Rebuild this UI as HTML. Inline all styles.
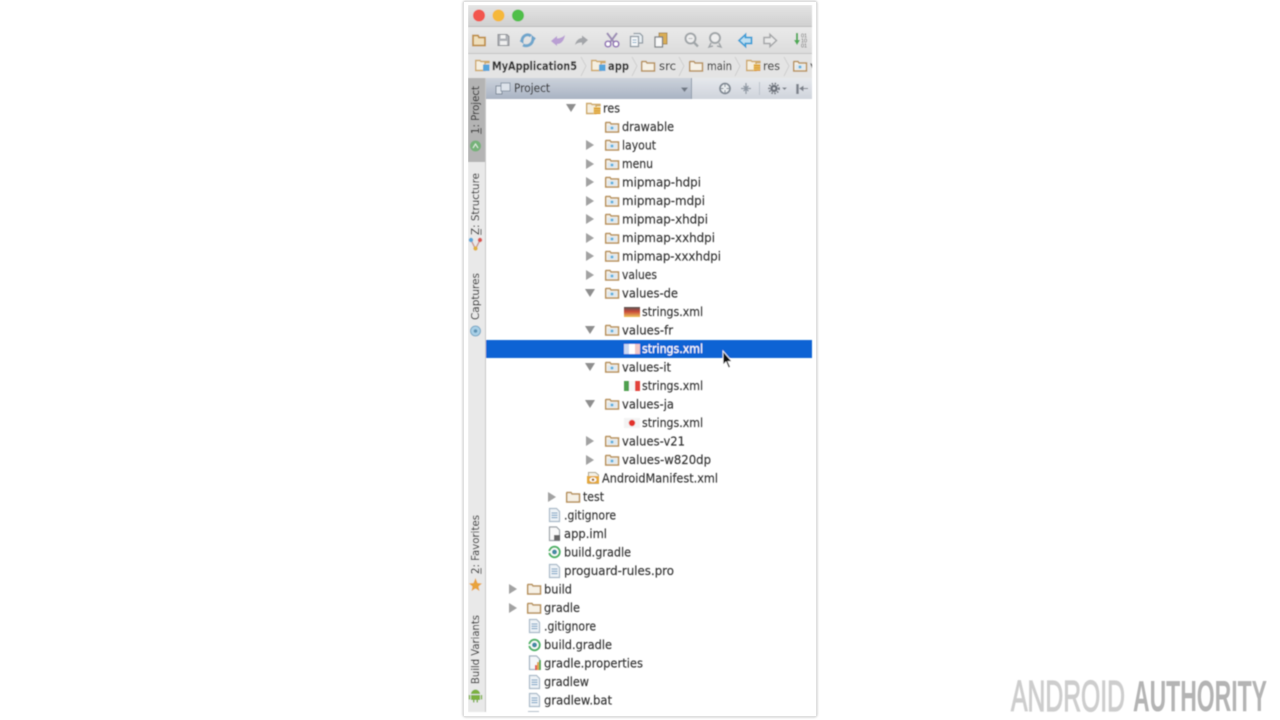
<!DOCTYPE html>
<html>
<head>
<meta charset="utf-8">
<style>
html,body{margin:0;padding:0;width:1280px;height:720px;overflow:hidden;background:#fff}
svg{display:block;position:absolute;left:0;top:0}
.t{font-family:"DejaVu Sans","Liberation Sans",sans-serif;font-size:12px;fill:#333;stroke:#333;stroke-width:.15}
.v{font-family:"DejaVu Sans","Liberation Sans",sans-serif;font-size:11px;fill:#333;stroke:#333;stroke-width:.12}
</style>
</head>
<body>
<svg width="1280" height="720" viewBox="0 0 1280 720" xmlns="http://www.w3.org/2000/svg">
<defs>
<linearGradient id="title" x1="0" y1="0" x2="0" y2="1"><stop offset="0" stop-color="#e4e4e4"/><stop offset="1" stop-color="#d0d0d0"/></linearGradient>
<linearGradient id="tool" x1="0" y1="0" x2="0" y2="1"><stop offset="0" stop-color="#e9e9e9"/><stop offset="1" stop-color="#dcdcdc"/></linearGradient>
<linearGradient id="hd" x1="0" y1="0" x2="0" y2="1"><stop offset="0" stop-color="#ccd2db"/><stop offset="1" stop-color="#a9b3c3"/></linearGradient>
<linearGradient id="hd2" x1="0" y1="0" x2="0" y2="1"><stop offset="0" stop-color="#e6e8ec"/><stop offset="1" stop-color="#cfd4dc"/></linearGradient>
<linearGradient id="de" x1="0" y1="0" x2="0" y2="1"><stop offset="0" stop-color="#555"/><stop offset=".45" stop-color="#c8473a"/><stop offset="1" stop-color="#edc45a"/></linearGradient>
<filter id="soft" x="0" y="0" width="100%" height="100%"><feGaussianBlur stdDeviation="0.5"/></filter>
<filter id="sh" x="-5%" y="-5%" width="110%" height="110%"><feGaussianBlur stdDeviation="1"/></filter>
<clipPath id="navclip"><rect x="468" y="54" width="344" height="24"/></clipPath>
<g id="fo"><path d="M0.7 2V11H13.5V3H6L5 1.500H1Z" fill="#f6f1e6" stroke="#b7925c" stroke-width="1.500"/></g>
<g id="fb"><use href="#fo"/><rect x="2.500" y="4.500" width="9.500" height="5" fill="#dfe9f0"/><circle cx="7" cy="7" r="1.500" fill="#5fb0dc"/></g>
<g id="fm"><path d="M0.700 1.500V11.500H10V3.500H14V2.500H6L5 1.500Z" fill="#f5efe0" stroke="#cda868" stroke-width="1.400"/><rect x="8" y="5.500" width="6.500" height="6.500" fill="#55a5dc"/></g>
<g id="fr"><path d="M0.700 1.500V11.500H10V3.500H14V2.500H6L5 1.500Z" fill="#f5efe0" stroke="#cda868" stroke-width="1.400"/><rect x="7.500" y="5" width="7" height="7" fill="#eccb6e"/><rect x="8" y="6" width="6.500" height="1.300" fill="#d9952a"/><rect x="8" y="8.300" width="6.500" height="1.300" fill="#d9952a"/><rect x="8" y="10.600" width="6.500" height="1.300" fill="#d9952a"/></g>
<path id="ar" d="M0 0L8 5L0 10Z" fill="#a2a2a2"/>
<path id="ad" d="M0 0H10L5 8Z" fill="#8e8e8e"/>
<g id="doc"><path d="M0.500 0.500H7.500L10.500 3.500V13.500H0.500Z" fill="#eef3f7" stroke="#a9b9c7" stroke-width="1.200"/><path d="M2.500 5H8.500M2.500 7.300H8.500M2.500 9.600H8.500" stroke="#6f9cc0" stroke-width="1"/></g>
<g id="gr"><circle cx="6.500" cy="6.500" r="5.200" fill="#fff" stroke="#4fb267" stroke-width="2"/><circle cx="6.500" cy="6.500" r="2.500" fill="#458ba3"/><path d="M-0.500 6.500H2.500" stroke="#fff" stroke-width="1.600"/></g>
</defs>

<!-- window shadow -->
<rect x="463.500" y="1.500" width="353" height="715" fill="#fff" stroke="#8f8f8f" stroke-width="1" rx="2" filter="url(#sh)"/>
<rect x="464" y="2" width="352" height="714" fill="#fff"/>

<g filter="url(#soft)">
<!-- title bar -->
<rect x="468" y="5" width="344" height="21" fill="url(#title)"/>
<rect x="468" y="26" width="344" height="1" fill="#bcbcbc"/>
<circle cx="479" cy="15.500" r="6" fill="#f2554d"/>
<circle cx="498.500" cy="15.500" r="6" fill="#f5b83b"/>
<circle cx="518" cy="15.500" r="6" fill="#4fbf4a"/>

<!-- toolbar -->
<rect x="468" y="27" width="344" height="27" fill="url(#tool)"/>
<rect x="468" y="53" width="344" height="1" fill="#c4c4c4"/>
<path d="M473 35.500V45.500H485V37.500H479L478 35.500Z" fill="#efdfbc" stroke="#bf9048" stroke-width="1.800"/>
<path d="M498 34.500H507L509 36.500V45.500H498Z" fill="#aeb1b6" stroke="#8a8d92"/><rect x="500.500" y="35" width="5" height="3.500" fill="#f2f2f2"/><rect x="500" y="41" width="7" height="4" fill="#eee"/>
<path d="M531 36C527 33 522 36 522 41L520.500 40M523 45C527 47 533 45 533 38L535 39.500" fill="none" stroke="#6fa6cc" stroke-width="3"/>
<path d="M551 41L557 36V38.500C560 38.500 563 37 565 35C564 41 561 44 557 44V46Z" fill="#b99fd3"/>
<path d="M588 40L582 35.500V38C579 38 576 40.500 575 45C577 43 579 42.500 582 42.500V45.500Z" fill="#a3a5a9"/>
<path d="M607 33L614.500 43M617 33L609.500 43" stroke="#9c8db5" stroke-width="2" fill="none"/><circle cx="608" cy="44" r="2.800" fill="#fff" stroke="#9577b8" stroke-width="1.700"/><circle cx="616" cy="44" r="2.800" fill="#fff" stroke="#9577b8" stroke-width="1.700"/>
<path d="M633.500 33.500H640L642.500 36V43H639" fill="#e8eef2" stroke="#8f9aa3" stroke-width="1.300"/><rect x="630.500" y="36.500" width="8" height="10" fill="#f5f7f9" stroke="#8f9aa3" stroke-width="1.300"/>
<path d="M632.500 40H636.500M632.500 42.500H636.500" stroke="#8ab0cb"/>
<rect x="659" y="33" width="8" height="11" fill="#d9ad55" stroke="#a98a4e"/><rect x="655" y="37" width="7.500" height="10" fill="#f8f8f8" stroke="#7d8083" stroke-width="1.300"/>
<circle cx="690.500" cy="38.500" r="5" fill="#eee" stroke="#a0a5a8" stroke-width="2"/><path d="M694 42.500L698 46.500" stroke="#a0a5a8" stroke-width="2.400"/><path d="M688.500 38.500H692.500" stroke="#b5b8ba"/>
<circle cx="715" cy="38" r="5" fill="#eee" stroke="#a0a5a8" stroke-width="2"/><path d="M711 43L709 47L713 46M719 43L721 47L717 46" stroke="#a0a5a8" stroke-width="1.500" fill="none"/>
<path d="M739 40.500L745.500 34.500V37.500H751.500V43.500H745.500V46.500Z" fill="#bfe0f2" stroke="#3c9fd6" stroke-width="1.800"/>
<path d="M776.500 40.500L770 34.500V37.500H764V43.500H770V46.500Z" fill="#e9e9e9" stroke="#a4a6a8" stroke-width="1.500"/>
<path d="M797 33V41" stroke="#4eaa55" stroke-width="2"/><path d="M794 40L797 45L800 40Z" fill="#4eaa55"/>
<text x="801" y="37.500" font-family="Liberation Sans,sans-serif" font-size="5.500" fill="#666">01</text><text x="801" y="42.500" font-family="Liberation Sans,sans-serif" font-size="5.500" fill="#666">10</text><text x="801" y="47.500" font-family="Liberation Sans,sans-serif" font-size="5.500" fill="#666">01</text>

<!-- nav bar -->
<rect x="468" y="54" width="344" height="24" fill="#e4e4e4"/>
<use href="#fm" x="475" y="59"/>
<text x="492" y="70" class="t" style="font-weight:bold;font-size:11.500px" textLength="85" lengthAdjust="spacingAndGlyphs">MyApplication5</text>
<path d="M581 57L586 66L581 76" fill="none" stroke="#cfcfcf"/>
<use href="#fm" x="591" y="59"/>
<text x="608" y="70" class="t" style="font-weight:bold;font-size:11.500px" textLength="21" lengthAdjust="spacingAndGlyphs">app</text>
<path d="M632 57L637 66L632 76" fill="none" stroke="#cfcfcf"/>
<use href="#fo" x="641" y="60"/>
<text x="659" y="70" class="t" style="font-size:11.500px" textLength="17" lengthAdjust="spacingAndGlyphs">src</text>
<path d="M679 57L684 66L679 76" fill="none" stroke="#cfcfcf"/>
<use href="#fo" x="689" y="60"/>
<text x="707" y="70" class="t" style="font-size:11.500px" textLength="25" lengthAdjust="spacingAndGlyphs">main</text>
<path d="M735 57L740 66L735 76" fill="none" stroke="#cfcfcf"/>
<use href="#fr" x="746" y="59"/>
<text x="763" y="70" class="t" style="font-size:11.500px" textLength="17" lengthAdjust="spacingAndGlyphs">res</text>
<path d="M784 57L789 66L784 76" fill="none" stroke="#cfcfcf"/>
<use href="#fb" x="793" y="60"/>
<g clip-path="url(#navclip)"><text x="810" y="70" class="t" style="font-size:11.500px">v</text></g>

<!-- tool window header -->
<rect x="486" y="78" width="205" height="21" fill="url(#hd)"/>
<rect x="692" y="78" width="120" height="21" fill="url(#hd2)"/>
<rect x="691" y="78" width="1" height="21" fill="#8f9bab"/>
<rect x="496" y="86" width="6" height="8" fill="#dde3ea" stroke="#7e8a99"/><rect x="501" y="83" width="9" height="8" fill="#dde3ea" stroke="#8b98a8"/>
<text x="514" y="92" class="t" style="font-size:11.500px" textLength="36" lengthAdjust="spacingAndGlyphs">Project</text>
<path d="M681 87.500H688L684.500 92Z" fill="#6f7884"/>
<circle cx="725" cy="88.500" r="5" fill="#e9ecef" stroke="#7f8893" stroke-width="1.800"/><path d="M725 84.500V87M725 90V92.500M721 88.500H723.500M726.500 88.500H729" stroke="#7f8893"/>
<path d="M746 83V94M741 88.500H751M743.500 86L746 88L748.500 86M743.500 91L746 89L748.500 91" stroke="#8f98a3" stroke-width="1.300" fill="none"/>
<rect x="759" y="82" width="1" height="13" fill="#bcc3cc"/>
<circle cx="774" cy="88.500" r="3.800" fill="#6f757e"/><circle cx="774" cy="88.500" r="5" fill="none" stroke="#6f757e" stroke-width="1.800" stroke-dasharray="1.500 1.500"/><circle cx="774" cy="88.500" r="1.200" fill="#d9dde2"/>
<path d="M782 87.500H787L784.500 90Z" fill="#7b818a"/>
<path d="M797.500 84V94" stroke="#7b818a" stroke-width="2.500"/><path d="M800 88.500H808M800 88.500L803 86.500V90.500Z" stroke="#7b818a" fill="#7b818a"/>

<!-- sidebar -->
<rect x="468" y="78" width="18" height="634" fill="#e9e9e9"/>
<rect x="485" y="78" width="1" height="634" fill="#c8c8c8"/>
<rect x="468" y="78" width="17" height="84" fill="#b4b4b4"/>
<text class="v" transform="translate(479,134) rotate(-90)" textLength="48" lengthAdjust="spacingAndGlyphs">1: Project</text>
<path d="M481 134V128" stroke="#333"/>
<circle cx="475.500" cy="146" r="5.500" fill="#76b279"/><path d="M473 148L475.500 144L478 148" stroke="#e6f0e6" fill="none"/>
<text class="v" transform="translate(479,235) rotate(-90)" textLength="62" lengthAdjust="spacingAndGlyphs">Z: Structure</text>
<path d="M481 235V229" stroke="#333"/>
<path d="M471 240L475.500 249L480 240" fill="none" stroke="#c89a9a" stroke-width="1.400"/><circle cx="471" cy="240" r="2.200" fill="#5aa6d8"/><circle cx="480" cy="240" r="2.200" fill="#d9534f"/><circle cx="475.500" cy="248.500" r="2.200" fill="#e0b13e"/>
<text class="v" transform="translate(479,320) rotate(-90)" textLength="47" lengthAdjust="spacingAndGlyphs">Captures</text>
<circle cx="475.500" cy="331" r="5" fill="#a8cfe6" stroke="#7aa9c6"/><circle cx="475.500" cy="331" r="1.800" fill="#5f93b3"/>
<text class="v" transform="translate(479,574) rotate(-90)" textLength="59" lengthAdjust="spacingAndGlyphs">2: Favorites</text>
<path d="M481 574V568" stroke="#333"/>
<path d="M475.500 578L477.500 583L482 583.500L478.500 586.500L479.500 591L475.500 588.500L471.500 591L472.500 586.500L469 583.500L473.500 583Z" fill="#e8a33c"/>
<text class="v" transform="translate(479,684) rotate(-90)" textLength="69" lengthAdjust="spacingAndGlyphs">Build Variants</text>
<path d="M471 694A4.500 4.500 0 0 1 480 694ZM471 695H480V700H478V702.500H476.500V700H474.500V702.500H473V700H471ZM468.800 695H470.200V699.500H468.800ZM480.800 695H482.200V699.500H480.800Z" fill="#7cb13f"/>

<!-- selection -->
<rect x="486" y="340" width="326" height="18" fill="#0863d4"/>

<!-- tree icons: arrows -->
<use href="#ad" x="566" y="104"/>
<use href="#ar" x="586" y="140"/><use href="#ar" x="586" y="159"/><use href="#ar" x="586" y="177"/><use href="#ar" x="586" y="196"/><use href="#ar" x="586" y="214"/><use href="#ar" x="586" y="233"/><use href="#ar" x="586" y="251"/><use href="#ar" x="586" y="270"/>
<use href="#ad" x="585" y="289"/><use href="#ad" x="585" y="326"/><use href="#ad" x="585" y="363"/><use href="#ad" x="585" y="400"/>
<use href="#ar" x="586" y="436"/><use href="#ar" x="586" y="455"/>
<use href="#ar" x="548" y="492"/>
<use href="#ar" x="509" y="584"/><use href="#ar" x="509" y="603"/>

<!-- folders -->
<use href="#fr" x="586" y="102"/>
<use href="#fb" x="605" y="121"/><use href="#fb" x="605" y="139"/><use href="#fb" x="605" y="158"/><use href="#fb" x="605" y="176"/><use href="#fb" x="605" y="195"/><use href="#fb" x="605" y="213"/><use href="#fb" x="605" y="232"/><use href="#fb" x="605" y="250"/><use href="#fb" x="605" y="269"/><use href="#fb" x="605" y="287"/><use href="#fb" x="605" y="324"/><use href="#fb" x="605" y="361"/><use href="#fb" x="605" y="398"/><use href="#fb" x="605" y="435"/><use href="#fb" x="605" y="454"/>
<use href="#fo" x="566" y="491"/><use href="#fo" x="527" y="583"/><use href="#fo" x="527" y="602"/>

<!-- flags -->
<rect x="624" y="307" width="16" height="10" fill="url(#de)"/>
<rect x="624" y="344" width="5" height="10" fill="#c9d7f2"/><rect x="629" y="344" width="6" height="10" fill="#fff"/><rect x="635" y="344" width="5" height="10" fill="#f0c6c6"/>
<rect x="624" y="381" width="5" height="10" fill="#4fa04f"/><rect x="629" y="381" width="6" height="10" fill="#f7f7f7"/><rect x="635" y="381" width="5" height="10" fill="#e2433a"/>
<rect x="624" y="418" width="16" height="10" fill="#f3f3f3"/><circle cx="632" cy="423" r="3.200" fill="#e2332c"/>

<!-- manifest -->
<path d="M588.500 472.500H595.500L598.500 475V483.500H588.500Z" fill="#f4f1e6" stroke="#a9a490"/><rect x="587" y="476" width="12" height="7.500" fill="#e4a93c"/><ellipse cx="593" cy="479.700" rx="3.500" ry="2.300" fill="#fff"/><circle cx="593" cy="479.700" r="1.300" fill="#a06a1c"/>

<!-- files -->
<use href="#doc" x="549" y="508"/>
<path d="M549.500 527H556.500L559.500 530V540.500H549.500Z" fill="#fafafa" stroke="#9aa0a6" stroke-width="1.200"/><rect x="554" y="535" width="6" height="5.500" fill="#666"/>
<use href="#gr" x="548" y="545.500"/>
<use href="#doc" x="549" y="564"/>
<use href="#doc" x="529" y="619"/>
<use href="#gr" x="528" y="638.500"/>
<path d="M529.500 656H536.500L539.500 659V669.500H529.500Z" fill="#f4f7fa" stroke="#a0b0bf" stroke-width="1.200"/><rect x="535" y="665" width="1.800" height="5" fill="#e2433a"/><rect x="537" y="662" width="1.800" height="8" fill="#e0a33a"/><rect x="539" y="660" width="1.800" height="10" fill="#4fa04f"/>
<use href="#doc" x="529" y="675"/>
<use href="#doc" x="529" y="693"/>
<rect x="528" y="711" width="11" height="1" fill="#b5c0ca"/>

<!-- tree labels -->
<text class="t" x="603" y="112.500" textLength="17" lengthAdjust="spacingAndGlyphs">res</text>
<text class="t" x="622" y="131" textLength="52" lengthAdjust="spacingAndGlyphs">drawable</text>
<text class="t" x="622" y="149.500" textLength="34" lengthAdjust="spacingAndGlyphs">layout</text>
<text class="t" x="622" y="168" textLength="31" lengthAdjust="spacingAndGlyphs">menu</text>
<text class="t" x="622" y="186.500" textLength="79" lengthAdjust="spacingAndGlyphs">mipmap-hdpi</text>
<text class="t" x="622" y="205" textLength="83" lengthAdjust="spacingAndGlyphs">mipmap-mdpi</text>
<text class="t" x="622" y="223.500" textLength="86" lengthAdjust="spacingAndGlyphs">mipmap-xhdpi</text>
<text class="t" x="622" y="242" textLength="93" lengthAdjust="spacingAndGlyphs">mipmap-xxhdpi</text>
<text class="t" x="622" y="260.500" textLength="99" lengthAdjust="spacingAndGlyphs">mipmap-xxxhdpi</text>
<text class="t" x="622" y="279" textLength="35" lengthAdjust="spacingAndGlyphs">values</text>
<text class="t" x="622" y="297.500" textLength="56" lengthAdjust="spacingAndGlyphs">values-de</text>
<text class="t" x="642" y="316" textLength="61" lengthAdjust="spacingAndGlyphs">strings.xml</text>
<text class="t" x="622" y="334.500" textLength="51" lengthAdjust="spacingAndGlyphs">values-fr</text>
<text class="t" x="642" y="353" textLength="61" lengthAdjust="spacingAndGlyphs" style="fill:#fff;stroke:#fff">strings.xml</text>
<text class="t" x="622" y="371.500" textLength="49" lengthAdjust="spacingAndGlyphs">values-it</text>
<text class="t" x="642" y="390" textLength="61" lengthAdjust="spacingAndGlyphs">strings.xml</text>
<text class="t" x="622" y="408.500" textLength="52" lengthAdjust="spacingAndGlyphs">values-ja</text>
<text class="t" x="642" y="427" textLength="61" lengthAdjust="spacingAndGlyphs">strings.xml</text>
<text class="t" x="622" y="445.500" textLength="63" lengthAdjust="spacingAndGlyphs">values-v21</text>
<text class="t" x="622" y="464" textLength="89" lengthAdjust="spacingAndGlyphs">values-w820dp</text>
<text class="t" x="602" y="482.500" textLength="116" lengthAdjust="spacingAndGlyphs">AndroidManifest.xml</text>
<text class="t" x="583" y="501" textLength="21" lengthAdjust="spacingAndGlyphs">test</text>
<text class="t" x="564" y="519.500" textLength="52" lengthAdjust="spacingAndGlyphs">.gitignore</text>
<text class="t" x="564" y="538" textLength="43" lengthAdjust="spacingAndGlyphs">app.iml</text>
<text class="t" x="564" y="556.500" textLength="67" lengthAdjust="spacingAndGlyphs">build.gradle</text>
<text class="t" x="564" y="575" textLength="110" lengthAdjust="spacingAndGlyphs">proguard-rules.pro</text>
<text class="t" x="544" y="593.500" textLength="28" lengthAdjust="spacingAndGlyphs">build</text>
<text class="t" x="544" y="612" textLength="36" lengthAdjust="spacingAndGlyphs">gradle</text>
<text class="t" x="544" y="630.500" textLength="52" lengthAdjust="spacingAndGlyphs">.gitignore</text>
<text class="t" x="544" y="649" textLength="68" lengthAdjust="spacingAndGlyphs">build.gradle</text>
<text class="t" x="544" y="667.500" textLength="99" lengthAdjust="spacingAndGlyphs">gradle.properties</text>
<text class="t" x="544" y="686" textLength="45" lengthAdjust="spacingAndGlyphs">gradlew</text>
<text class="t" x="544" y="704.500" textLength="68" lengthAdjust="spacingAndGlyphs">gradlew.bat</text>

<!-- cursor -->
<path d="M723 351V365L726 362L728.500 368L730.500 367L728 361.500H732Z" fill="#111" stroke="#fff" stroke-width="0.800"/>

<!-- watermark -->
<text x="1011" y="711" font-family="Liberation Sans,sans-serif" font-size="44" fill="#cdcdcd" stroke="#cdcdcd" stroke-width="1.200" textLength="114" lengthAdjust="spacingAndGlyphs">ANDROID</text>
<text x="1133" y="711" font-family="Liberation Sans,sans-serif" font-size="44" font-weight="bold" fill="#b4b4b4" textLength="134" lengthAdjust="spacingAndGlyphs">AUTHORITY</text>
</g>
</svg>
</body>
</html>
